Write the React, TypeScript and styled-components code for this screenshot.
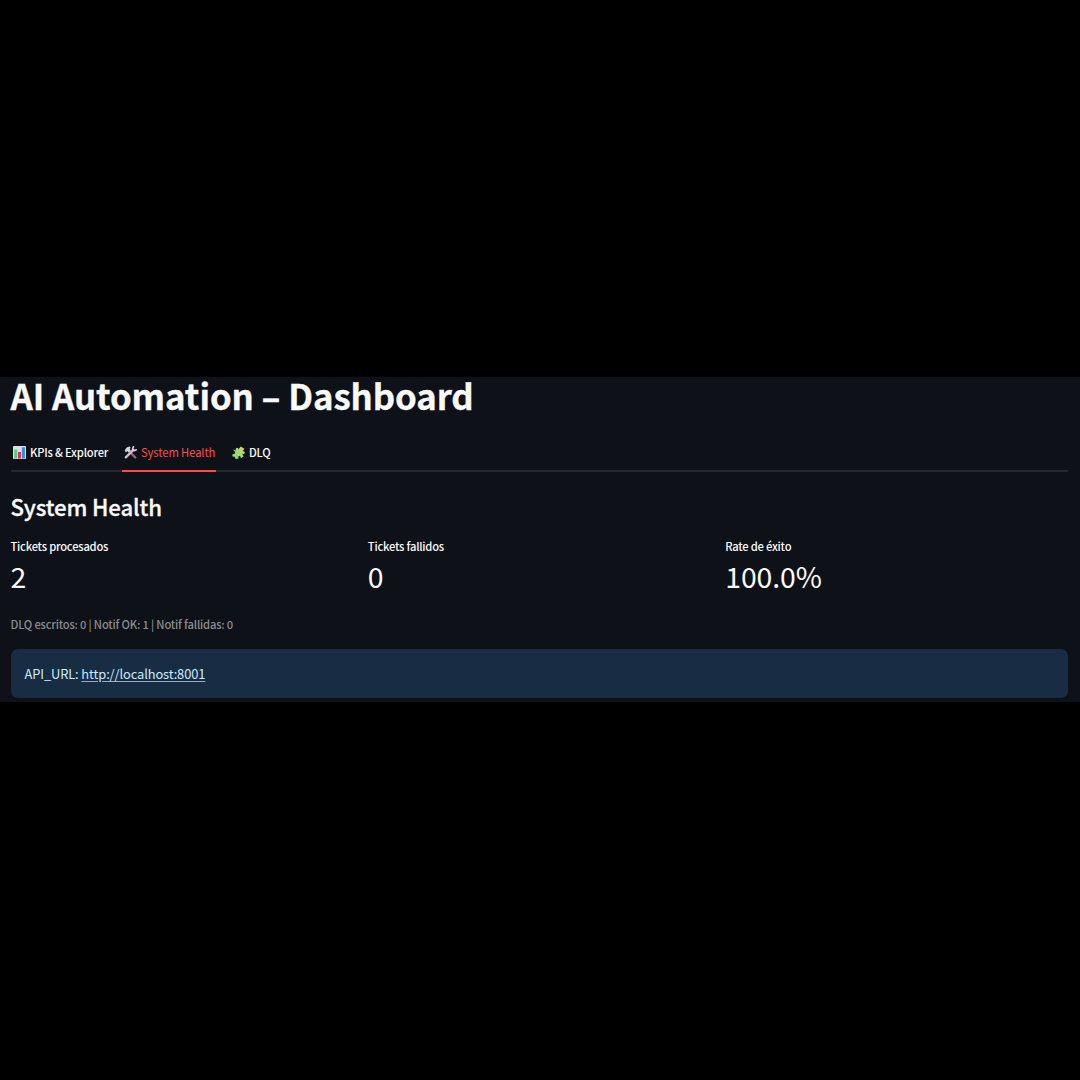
import React from "react";
import styled, { createGlobalStyle } from "styled-components";

const GlobalStyle = createGlobalStyle`
  body { margin: 0; background: #000; }
  * { box-sizing: border-box; }
`;

const Screen = styled.div`
  width: 1080px;
  height: 1080px;
  display: flex;
  flex-direction: column;
  justify-content: flex-start;
  padding-top: 377px;
  background: #000;
  color: #fafafa;
  font-family: "Noto Sans CJK SC", "Noto Sans", sans-serif;
`;

const Panel = styled.main`
  height: 325px;
  padding: 0 12px 0 10.5px;
  background: #0e1117;
  display: flex;
  flex-direction: column;
`;

const Title = styled.h1`
  margin: 0;
  font-size: 34.8px;
  line-height: 36px;
  font-weight: 700;
  letter-spacing: -0.1px;
  -webkit-text-stroke: 0.3px currentColor;
  white-space: nowrap;
`;

const TabList = styled.nav`
  display: flex;
  gap: 14px;
  height: 36px;
  margin-top: 23px;
  border-bottom: 2px solid #26282e;
`;

const Tab = styled.button<{ $active?: boolean; $width: number }>`
  display: flex;
  align-items: center;
  gap: 4.5px;
  width: ${(p) => p.$width}px;
  height: 36px;
  padding: 0 0 2px 2px;
  border: 0;
  border-bottom: 2px solid ${(p) => (p.$active ? "#ff4b4b" : "transparent")};
  background: none;
  color: ${(p) => (p.$active ? "#ff4b4b" : "#fafafa")};
  font: ${(p) => (p.$active ? 400 : 500)} 11.2px/16px "Noto Sans CJK SC", "Noto Sans", sans-serif;
  letter-spacing: ${(p) => (p.$active ? "-0.07px" : "-0.2px")};
  white-space: nowrap;

  svg { flex: none; }
`;

const Heading = styled.h2`
  margin: 20px 0 0;
  font-size: 22.2px;
  line-height: 28px;
  font-weight: 500;
  letter-spacing: -0.15px;
  -webkit-text-stroke: 0.3px currentColor;
`;

const Metrics = styled.section`
  display: grid;
  grid-template-columns: repeat(3, 1fr);
  column-gap: 14.6px;
  margin-top: 17px;
`;

const Metric = styled.div`
  display: flex;
  flex-direction: column;
`;

const MetricLabel = styled.span`
  font-size: 11.2px;
  line-height: 18px;
  font-weight: 500;
  letter-spacing: -0.22px;
`;

const MetricValue = styled.span`
  margin-top: 1px;
  font-size: 28.4px;
  line-height: 40px;
  font-weight: 400;
  letter-spacing: -0.1px;
`;

const Caption = styled.p`
  margin: 19px 0 0;
  color: #8b8c90;
  font-size: 11.2px;
  line-height: 18px;
  font-weight: 500;
  letter-spacing: -0.19px;
`;

const Alert = styled.div`
  display: flex;
  align-items: center;
  height: 49px;
  margin-top: 16px;
  padding: 0 14px;
  border-radius: 7px;
  background: #182c43;
  color: #c7ebff;
  font-size: 12.9px;
  line-height: 20px;
  letter-spacing: -0.12px;
  white-space: pre;
`;

const Link = styled.a`
  color: inherit;
  text-decoration: underline;
  text-decoration-color: #8fafc4;
  text-underline-offset: 1.5px;
`;

const ChartIcon = () => (
  <svg width="13" height="13" viewBox="0 0 13 13">
    <rect width="13" height="13" rx=".7" fill="#dfdce7" />
    <rect x="1.2" y="3.5" width="3" height="9" fill="#4ad37d" />
    <rect x="5" y="6" width="3" height="6.5" fill="#e52e67" />
    <rect x="8.9" y="1.3" width="3" height="11.2" fill="#2e91de" />
  </svg>
);

const ToolsIcon = () => (
  <svg width="13" height="13" viewBox="0 0 13 13" fill="none" strokeLinecap="round">
    <path d="M5 5.2 11.3 11.5" stroke="#996477" strokeWidth="2.4" />
    <path d="M.8 4.8C1.2 2.6 3.2.7 5.5.6L6.6 1.6 5.7 3 7 4.4 4.6 6.6 3.2 5.1 2 6.4Z" fill="#d8d1de" />
    <path d="M1.8 11.4 9.2 4.1" stroke="#c8c0cf" strokeWidth="2.3" />
    <path d="M9.4.9 8.5 3.2 9.9 4.6 12.2 3.8" stroke="#d8d1de" strokeWidth="1.7" strokeLinejoin="round" />
  </svg>
);

const PuzzleIcon = () => (
  <svg width="13" height="13" viewBox="0 0 13 13">
    <defs>
      <linearGradient id="puzzle" x1="0" y1="1" x2="1" y2="0">
        <stop offset="0" stopColor="#68dc83" />
        <stop offset="1" stopColor="#e1d365" />
      </linearGradient>
    </defs>
    <path
      d="M1 3.4 3.8 4.4C3.4 2.6 4 1.7 5 1.7S6.5 2.4 6.4 3.6L8.6.6 12.4 2.8 10.7 5.2C12.2 5 13 5.9 12.8 7S11.4 8.4 10.1 7.6L11.6 10.4 8.9 12.2C8.7 10.3 7.7 9.7 6.9 10.1S6.2 11.5 6.7 12.4L3.4 12.9 2.7 10.6C1.4 11.2.4 10.5.3 9.5S1.2 7.6 2.7 7.9L3.2 6.3Z"
      fill="url(#puzzle)"
    />
  </svg>
);

const metrics = [
  { label: "Tickets procesados", value: "2" },
  { label: "Tickets fallidos", value: "0" },
  { label: "Rate de éxito", value: "100.0%" },
];

export default function App() {
  return (
    <Screen>
      <GlobalStyle />
      <Panel>
        <Title>AI Automation – Dashboard</Title>
        <TabList>
          <Tab $width={97}><ChartIcon />KPIs &amp; Explorer</Tab>
          <Tab $width={94} $active><ToolsIcon />System Health</Tab>
          <Tab $width={42}><PuzzleIcon />DLQ</Tab>
        </TabList>
        <Heading>System Health</Heading>
        <Metrics>
          {metrics.map((m) => (
            <Metric key={m.label}>
              <MetricLabel>{m.label}</MetricLabel>
              <MetricValue>{m.value}</MetricValue>
            </Metric>
          ))}
        </Metrics>
        <Caption>DLQ escritos: 0 | Notif OK: 1 | Notif fallidas: 0</Caption>
        <Alert>API_URL: <Link href="http://localhost:8001">http://localhost:8001</Link></Alert>
      </Panel>
    </Screen>
  );
}
